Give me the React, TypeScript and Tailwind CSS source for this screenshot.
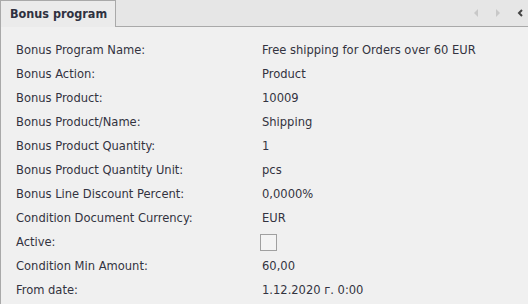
import React from "react";

const rows: [string, string][] = [
  ["Bonus Program Name:", "Free shipping for Orders over 60 EUR"],
  ["Bonus Action:", "Product"],
  ["Bonus Product:", "10009"],
  ["Bonus Product/Name:", "Shipping"],
  ["Bonus Product Quantity:", "1"],
  ["Bonus Product Quantity Unit:", "pcs"],
  ["Bonus Line Discount Percent:", "0,0000%"],
  ["Condition Document Currency:", "EUR"],
  ["Active:", "__checkbox__"],
  ["Condition Min Amount:", "60,00"],
  ["From date:", "1.12.2020 г. 0:00"],
];

const App: React.FC = () => {
  return (
    <div className="h-[304px] w-[528px] overflow-hidden bg-[#f0f0f0] font-['Tahoma','DejaVu_Sans_Condensed','Liberation_Sans',sans-serif] text-[12.8px] text-[#333340]">
      {/* header strip */}
      <div className="flex h-[27px] items-stretch border-b border-[#a9a9a9] bg-[#e6e6e6]">
        <div className="-mb-px flex w-[116px] items-center border-r border-t border-l border-[#a9a9a9] bg-[#ebebeb] pl-[9px] text-[12.5px] font-bold text-[#2f3140]">
          Bonus program
        </div>
        <div className="flex-1" />
        <div className="flex items-center gap-[14px] pr-[4px]">
          <svg width="8" height="10" viewBox="0 0 8 10">
            <path d="M6 1 L2 5 L6 9 Z" fill="#c8c8c8" />
          </svg>
          <svg width="8" height="10" viewBox="0 0 8 10">
            <path d="M2 1 L6 5 L2 9 Z" fill="#c8c8c8" />
          </svg>
          <svg width="8" height="10" viewBox="0 0 8 10">
            <path d="M6 2 L3 5 L6 8" stroke="#444" strokeWidth="2" fill="none" />
          </svg>
        </div>
      </div>
      {/* body */}
      <div className="h-full border-l border-[#a9a9a9] pt-[11px] pl-[15px]">
        {rows.map(([label, value]) => (
          <div key={label} className="flex h-[24px] items-center">
            <div className="w-[246px]">{label}</div>
            <div>
              {value === "__checkbox__" ? (
                <div className="-ml-[2px] h-[17px] w-[17px] border border-[#a0a0a0] bg-[#f4f4f4]" />
              ) : (
                value
              )}
            </div>
          </div>
        ))}
      </div>
    </div>
  );
};

export default App;
